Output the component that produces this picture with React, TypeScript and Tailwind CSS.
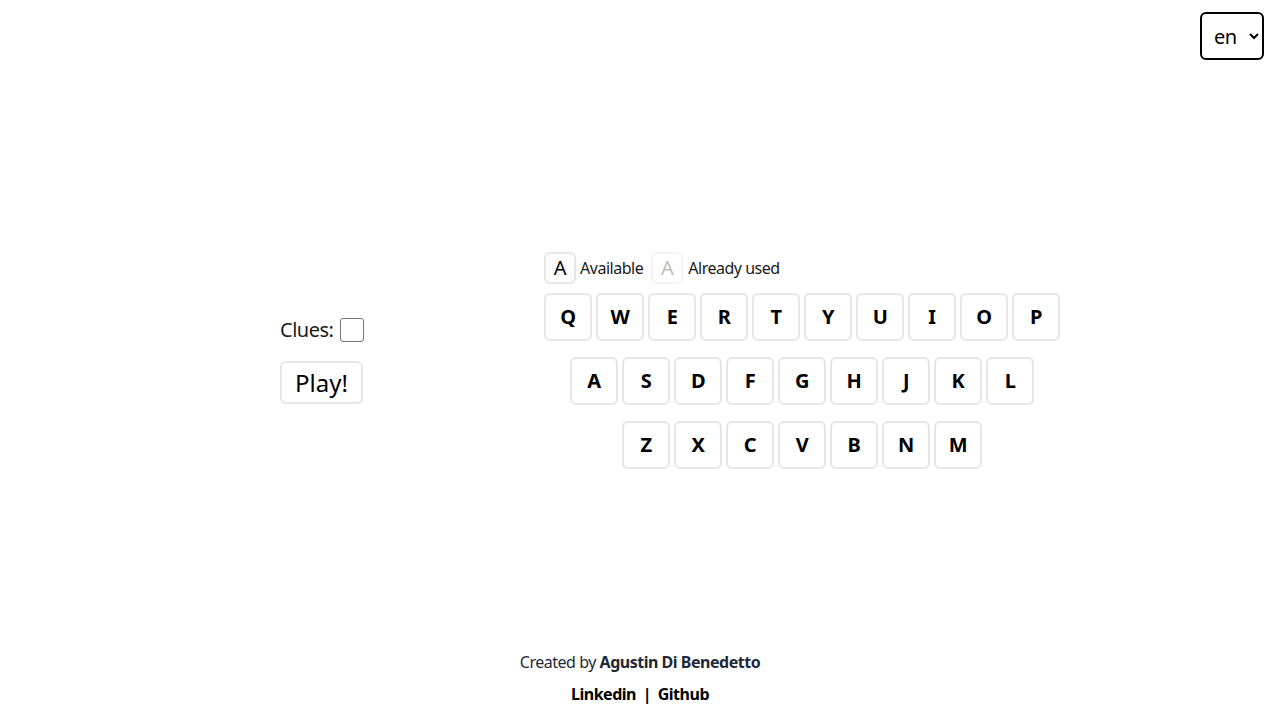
import React from "react";

const rows = [
  ["Q", "W", "E", "R", "T", "Y", "U", "I", "O", "P"],
  ["A", "S", "D", "F", "G", "H", "J", "K", "L"],
  ["Z", "X", "C", "V", "B", "N", "M"],
];

export default function App() {
  return (
    <div
      className="w-full h-[720px] flex flex-col bg-white text-[#1a1a1a] tracking-[-0.03em]"
      style={{ fontFamily: '"Noto Sans", "Open Sans", sans-serif' }}
    >
      <div className="h-[60px] flex justify-end items-start pt-3 pr-4">
        <select
          defaultValue="en"
          className="w-16 h-12 border-2 border-black rounded-md text-xl pl-2 bg-white text-black"
        >
          <option value="en">en</option>
          <option value="es">es</option>
        </select>
      </div>
      <main className="h-[580px] pt-5 flex items-center">
        <div className="ml-[280px] w-[264px] flex flex-col items-start gap-[19px]">
          <div className="flex items-center h-6 mt-[2px]">
            <span className="text-xl">Clues:</span>
            <span className="ml-[6px] w-6 h-6 border border-[#767676] rounded-[3px] bg-white" />
          </div>
          <button className="w-[83px] h-[43px] border-2 border-[#e6e6e6] rounded-md text-2xl bg-white text-black leading-none tracking-normal">
            Play!
          </button>
        </div>
        <div className="flex flex-col">
          <div className="flex items-center h-8 mb-[9px] text-base">
            <span className="w-8 h-8 border-2 border-[#e6e6e6] rounded-md flex items-center justify-center text-xl text-black">
              A
            </span>
            <span className="ml-1">Available</span>
            <span className="ml-2 w-8 h-8 border-2 border-[#f3f3f3] rounded-md flex items-center justify-center text-xl text-[#bdbdbd]">
              A
            </span>
            <span className="ml-[5px]">Already used</span>
          </div>
          <div className="flex flex-col items-center gap-4 w-[516px]">
            {rows.map((row, i) => (
              <div key={i} className="flex gap-1">
                {row.map((k) => (
                  <button
                    key={k}
                    className="w-12 h-12 border-2 border-[#e6e6e6] rounded-md bg-white text-xl font-bold text-black flex items-center justify-center"
                  >
                    {k}
                  </button>
                ))}
              </div>
            ))}
          </div>
        </div>
      </main>
      <footer className="h-[80px] flex flex-col items-center pt-[10px] gap-2 text-base text-[#1f2937]">
        <div className="leading-6">
          Created by <span className="font-bold">Agustin Di Benedetto</span>
        </div>
        <div className="leading-6 font-bold text-black">
          Linkedin <span className="mx-[3px]">|</span> Github
        </div>
      </footer>
    </div>
  );
}
